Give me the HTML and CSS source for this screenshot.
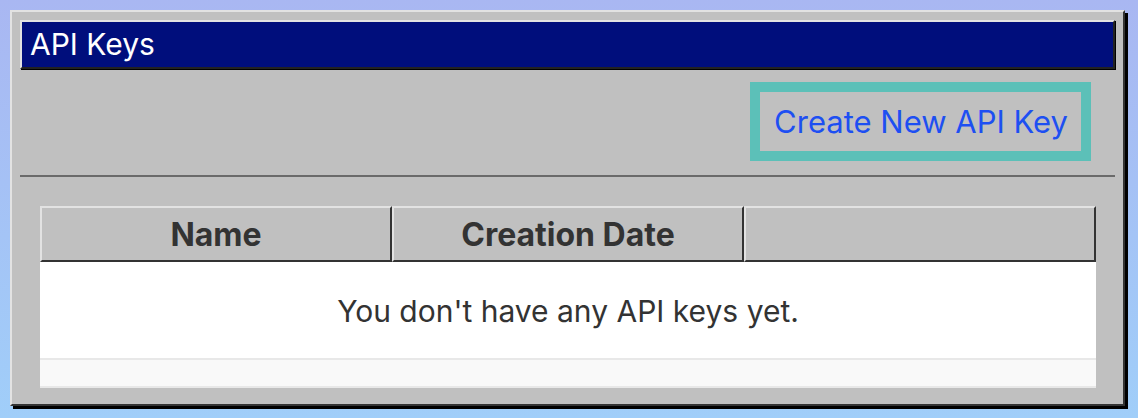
FILE: index.html
```html
<!DOCTYPE html>
<html lang="en">
<head>
<meta charset="utf-8">
<title>API Keys</title>
<link rel="stylesheet" href="styles.css">
</head>
<body>
<div class="wrap">
  <section class="panel">
    <h1 class="title">API Keys</h1>
    <div class="actions">
      <a class="create-btn" href="#">Create New API Key</a>
    </div>
    <hr class="divider">
    <table class="keys">
      <thead>
        <tr>
          <th>Name</th>
          <th>Creation Date</th>
          <th></th>
        </tr>
      </thead>
      <tbody>
        <tr class="empty"><td colspan="3">You don't have any API keys yet.</td></tr>
        <tr class="filler"><td colspan="3"></td></tr>
      </tbody>
    </table>
  </section>
</div>
</body>
</html>
```
FILE: styles.css
```css
html, body {
  margin: 0;
  padding: 0;
}
body {
  width: 1138px;
  height: 418px;
  background: linear-gradient(180deg, #a9b7f2 0%, #a0cef9 100%);
  font-family: Inter, "Noto Sans", "Liberation Sans", sans-serif;
  overflow: hidden;
}
.wrap {
  padding: 10px;
}
.panel {
  box-sizing: border-box;
  width: 1115px;
  background: #c0c0c0;
  border: 2px solid;
  border-color: #e2e2e2 #333 #333 #e2e2e2;
  box-shadow: 3px 3px 0 #000;
  padding: 8px 8px 16px;
}
.title {
  margin: 0;
  background: #000e7c;
  color: #fff;
  font-weight: 400;
  font-size: 30px;
  line-height: 45px;
  padding-left: 8px;
  border: 2px solid;
  border-color: #e2e2e2 #222 #222 #e2e2e2;
  box-shadow: 1px 1px 0 #000;
}
.actions {
  display: flex;
  justify-content: flex-end;
  padding-right: 24px;
  margin-top: 13px;
}
.create-btn {
  display: block;
  border: 10px solid #5cc0b8;
  padding: 1px 13px 0 14px;
  line-height: 58px;
  font-size: 31px;
  color: #1d4ff2;
  text-decoration: none;
}
.divider {
  margin: 14px 0 0;
  border: 0;
  border-top: 2px solid #6a6a6a;
  height: 0;
}
.keys {
  width: calc(100% - 39px);
  margin: 29px 20px 0;
  border-collapse: separate;
  border-spacing: 0;
  table-layout: fixed;
}
.keys th {
  height: 56px;
  padding: 1px 0 0;
  box-sizing: border-box;
  background: #c0c0c0;
  border: 2px solid;
  border-color: #e2e2e2 #333 #333 #e2e2e2;
  font-size: 32px;
  font-weight: 700;
  color: #333;
  text-align: center;
}
.keys td {
  padding: 0;
  text-align: center;
  border-bottom: 2px solid #e8e8e8;
}
.empty td {
  background: #fff;
  height: 98px;
  padding-top: 1px;
  box-sizing: border-box;
  font-size: 30px;
  color: #333;
}
.filler td {
  background: #f9f9f9;
  height: 26px;
}
```
